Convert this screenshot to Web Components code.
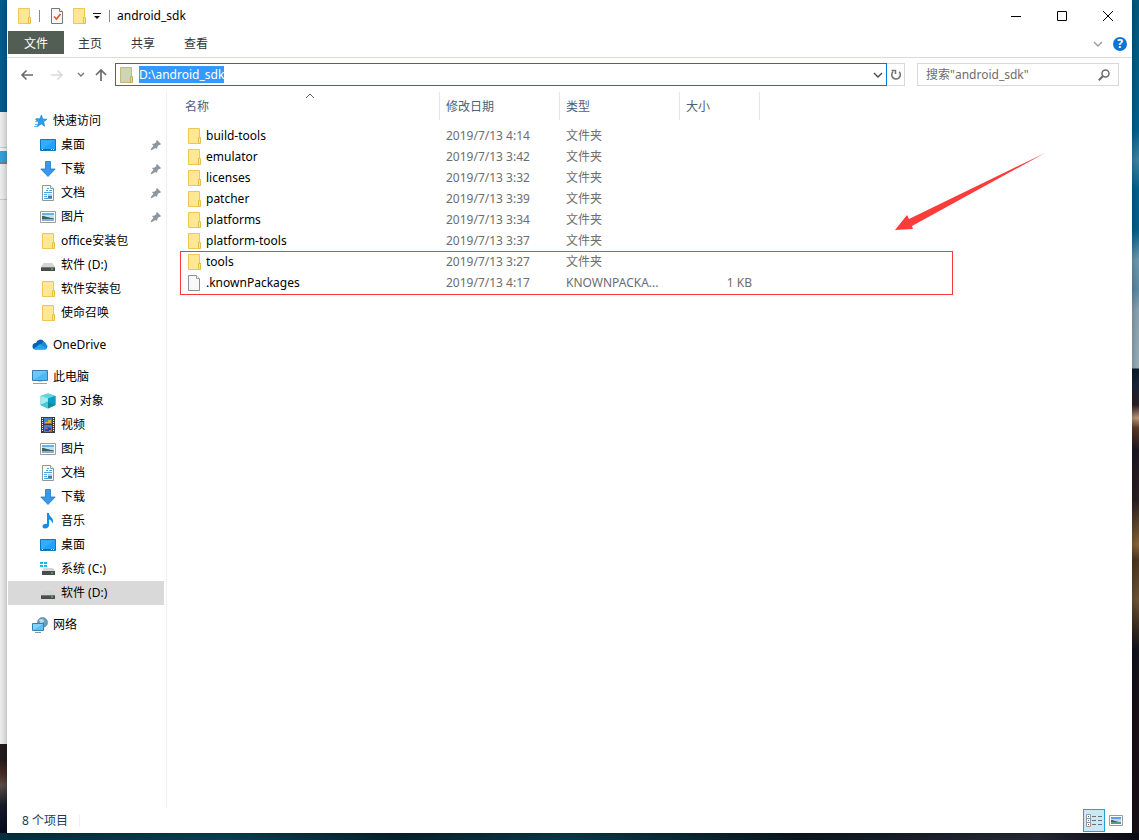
<!DOCTYPE html>
<html lang="zh-CN">
<head>
<meta charset="utf-8">
<title>android_sdk</title>
<style>
  html, body { margin: 0; height: 100%; }
  body { font: 12px/16px "Noto Sans", "Noto Sans CJK SC", sans-serif; color: #000; overflow: hidden; }
</style>
</head>
<body>
<desk-top>
  <explorer-window>
    <title-bar slot="title" heading="android_sdk"></title-bar>
    <ribbon-tabs slot="ribbon"></ribbon-tabs>
    <address-row slot="address" path="D:\android_sdk" hint='搜索"android_sdk"'></address-row>
    <nav-pane slot="nav">
      <nav-group>
        <nav-item icon="star" root>快速访问</nav-item>
        <nav-item icon="desktop" pinned>桌面</nav-item>
        <nav-item icon="download" pinned>下载</nav-item>
        <nav-item icon="doc" pinned>文档</nav-item>
        <nav-item icon="picture" pinned>图片</nav-item>
        <nav-item icon="folder">office安装包</nav-item>
        <nav-item icon="drive">软件 (D:)</nav-item>
        <nav-item icon="folder">软件安装包</nav-item>
        <nav-item icon="folder">使命召唤</nav-item>
      </nav-group>
      <nav-group>
        <nav-item icon="cloud" root>OneDrive</nav-item>
      </nav-group>
      <nav-group>
        <nav-item icon="pc" root>此电脑</nav-item>
        <nav-item icon="cube">3D 对象</nav-item>
        <nav-item icon="video">视频</nav-item>
        <nav-item icon="picture">图片</nav-item>
        <nav-item icon="doc">文档</nav-item>
        <nav-item icon="download">下载</nav-item>
        <nav-item icon="music">音乐</nav-item>
        <nav-item icon="desktop">桌面</nav-item>
        <nav-item icon="sysdrive">系统 (C:)</nav-item>
        <nav-item icon="drive" selected>软件 (D:)</nav-item>
      </nav-group>
      <nav-group>
        <nav-item icon="network" root>网络</nav-item>
      </nav-group>
    </nav-pane>
    <file-list slot="files"></file-list>
    <status-bar slot="status">8 个项目</status-bar>
  </explorer-window>
</desk-top>

<script>
const svg = (w, h, body) => `<svg width="${w}" height="${h}" viewBox="0 0 ${w} ${h}" aria-hidden="true">${body}</svg>`;

const ICONS = {
  folder: svg(16, 16, `<path d="M2.5.5h11v15h-11z" fill="#ffe794" stroke="#edc74f"/><path d="M12.500 9.500h2v6h-2z" fill="#ffe794" stroke="#e6bd45"/>`),
  folderdim: svg(16, 16, `<path d="M2.500.500h11v15h-11z" fill="#cdd5b4" stroke="#c2bb77"/><path d="M12.500 9.500h2v6h-2z" fill="#cdd5b4" stroke="#b9b06a"/>`),
  file: svg(16, 16, `<path d="M2.500.500h8l3 3v12h-11z" fill="#f7f8f9" stroke="#8e8e8e"/><path d="M10.500.500v3h3" fill="#fff" stroke="#9a9a9a"/>`),
  check: svg(16, 16, `<path d="M2.500.500h8l3 3v12h-11z" fill="#f6f7f8" stroke="#777"/><path d="M10.500.500v3h3" fill="#fff" stroke="#777"/><path d="M5 8.500l2.500 2.500 4-5" fill="none" stroke="#e8531f" stroke-width="1.600"/>`),
  star: svg(16, 16, `<path d="M9.500 2l1.300 4 4.200.200-3.300 2.600 1 4.500-3.500-2.300-4 2.800 1.300-4.900L3.500 6.500l4-.400z" fill="#2ba0ea" stroke="#1c7fc6" stroke-width=".6"/><path d="M4 5.500h3M3 8.500h3M3 11.500h2M2 13.500h3" stroke="#5ab6ec"/>`),
  desktop: svg(16, 16, `<path d="M.500 2.500h15v11H.500z" fill="#1fa3fb" stroke="#0f79bd"/><path d="M1 13V3h14z" fill="#4cb7ff" opacity=".45"/><path d="M1 12.500h14" stroke="#0d6fb9"/><path d="M2 12.500h1M11 12.500h1M13 12.500h1" stroke="#fff"/>`),
  download: svg(16, 16, `<path d="M5.500.500h5V8h4.700L8 15.500.800 8h4.700z" fill="#3b97e8" stroke="#1d76c9" stroke-width=".8"/>`),
  doc: svg(16, 16, `<path d="M2.500.500h8l3 3v12h-11z" fill="#fff" stroke="#959595"/><path d="M10.500.500v3h3" fill="#fff" stroke="#959595"/><path d="M7 3.500h2M6 5.500h2M9 5.500h3M4 7.500h8M4 9.500h3M4 11.500h3M4 13.500h8" stroke="#4aa2de"/><path d="M8 9h4v4H8z" fill="#a8d0ee"/><path d="M8 11h4v2H8z" fill="#4f7f80"/>`),
  picture: svg(16, 16, `<path d="M.500 2.500h15v11H.500z" fill="#fff" stroke="#9a9ea2"/><path d="M2 4h12v8H2z" fill="#c3e0f6"/><path d="M2 4h12v2H2z" fill="#6eaef0"/><path d="M2 7c3 0 6 1.500 12 2.500v.500H2z" fill="#35685b"/><path d="M2 10h12v2H2z" fill="#8ab0cf"/>`),
  drive: svg(16, 16, `<path d="M3.500 6h9L15 10H1z" fill="#d3d5d6"/><path d="M1 10h14v4H1z" fill="#4a4d4f"/><path d="M1 10.500h14" stroke="#777"/><path d="M11 11.500h2v1h-2z" fill="#55f04a"/>`),
  sysdrive: svg(16, 16, `<path d="M0 1h3v2H0zM4 1h3v2H4zM0 4h3v2H0zM4 4h3v2H4z" fill="#19b5f1"/><path d="M3.500 7h9.500l2 3H2z" fill="#d3d5d6"/><path d="M2 10h13v4H2z" fill="#4a4d4f"/><path d="M11 11.500h2v1h-2z" fill="#55f04a"/>`),
  cloud: svg(16, 16, `<path d="M4 6a4.500 4.500 0 0 1 8-1.500l-7 8H3A3.300 3.300 0 0 1 4 6z" fill="#0a5fb4"/><path d="M9 7c2-3 5-2 5 0a3 3 0 0 1-1 5.500H5z" fill="#1488db"/><path d="M2 11.500L8 7l7 4.500c-.500.800-1 1-2 1H3z" fill="#29a3ec"/>`),
  pc: svg(16, 16, `<path d="M.500 1.500h15v10H.500z" fill="#4ab9fb" stroke="#3d7da9"/><path d="M1 11V2h14z" fill="#82d2ff" opacity=".6"/><path d="M6 12h4v1H6z" fill="#c3d0da"/><path d="M1 14.500h14" stroke="#8fa5b5"/>`),
  cube: svg(16, 16, `<path d="M8 .500L15.500 3v9L8 15.500.500 12V3z" fill="#25b6cf"/><path d="M8 .500v8L.500 12V3z" fill="#a5ebee"/><path d="M8 .500L15.500 3 8 5.500.500 3z" fill="#5fd6dc"/><path d="M8 5.500L15.500 3v9L8 9z" fill="#0a9dc5"/><path d="M.500 12L8 9v6.500z" fill="#45cbd3"/><path d="M8 9l7.500 3L8 15.500z" fill="#0b8a9a"/>`),
  video: svg(16, 16, `<path d="M1 0h14v16H1z" fill="#3b3b3b"/><path d="M2.500 1v14M13.500 1v14" stroke="#fff" stroke-dasharray="1 1"/><path d="M4 1h8v6H4zM4 8h8v7H4z" fill="#4a7ed6"/><path d="M5 5h3V3h3v3H5z" fill="#d9b13c"/><path d="M5 13l2-3 4 1v3H5z" fill="#26488f"/><path d="M6 11h2v1H6zM9 13h2v1H9z" fill="#e06a3c"/>`),
  music: svg(16, 16, `<path d="M7 0h2c0 4 4 4 4 8 0 1-.500 2-1 2.500 0-2-1-3.500-3-4V12c0 2-1.500 3.500-4 3.500-1.500 0-2.500-1-2.500-2C2.500 11.500 5 10.500 7 11z" fill="#1090e4"/>`),
  network: svg(16, 16, `<circle cx="10.500" cy="5.500" r="5" fill="#6a9fbe" stroke="#47799a" stroke-width=".6"/><path d="M7 3c2-2 5-1 5 1s-3 1-3 3z" fill="#b5dbe6"/><path d="M.500 6.500h11v7H.500z" fill="#5cc0f7" stroke="#3a7fae"/><path d="M1 13V7h10z" fill="#9bdcff" opacity=".6"/><path d="M3 15.500h6" stroke="#8297a8"/>`),
  pin: svg(12, 12, `<path d="M7 1l4 4-1 1-1-.300L7.500 7.500 7 10 5.200 9 3 10.500.500 11.500 1.500 9 3.500 7 2 5l2.600-.500L6.500 3 6 2z" fill="#8c969e"/>`),
  qat: svg(8, 8, `<path d="M0 1.500h8" stroke="#111"/><path d="M1 4h6L4 7z" fill="#111"/>`),
  minimise: svg(10, 10, `<path d="M0 5.500h10" stroke="#000"/>`),
  maximise: svg(10, 10, `<path d="M.500.500h9v9h-9z" fill="none" stroke="#000"/>`),
  close: svg(10, 10, `<path d="M0 0l10 10M10 0L0 10" stroke="#000"/>`),
  back: svg(14, 14, `<path d="M13 7H2M6.500 2.500L2 7l4.500 4.500" fill="none" stroke="#6b6b6b" stroke-width="1.600"/>`),
  forward: svg(14, 14, `<path d="M1 7h11M7.500 2.500L12 7l-4.500 4.500" fill="none" stroke="#d9d9d9" stroke-width="1.600"/>`),
  up: svg(14, 14, `<path d="M7 13V2M2 7l5-5 5 5" fill="none" stroke="#6b6b6b" stroke-width="1.700"/>`),
  recent: svg(8, 6, `<path d="M1 1l3 3 3-3" fill="none" stroke="#777" stroke-width="1.400"/>`),
  chevron: svg(10, 6, `<path d="M1 1l4 4 4-4" fill="none" stroke="currentColor" stroke-width="1.300"/>`),
  sort: svg(10, 6, `<path d="M1 5l4-4 4 4" fill="none" stroke="#666"/>`),
  refresh: svg(12, 12, `<path d="M3.200 2.500a4.300 4.300 0 1 0 6 .300" fill="none" stroke="#777" stroke-width="1.600"/><path d="M1.500 1.500h4V5" fill="none" stroke="#777" stroke-width="1.500"/>`),
  search: svg(12, 12, `<circle cx="7.500" cy="4.500" r="3.500" fill="none" stroke="#6a6a6a" stroke-width="1.500"/><path d="M5 7L.800 11.200" stroke="#6a6a6a" stroke-width="2"/>`),
  details: svg(16, 14, `<path d="M.500.500h4v12h-4zM.500 4.500h4M.500 8.500h4" fill="#fff" stroke="#999"/><path d="M2 2h1v1H2z" fill="#555"/><path d="M2 6h1v1H2z" fill="#2e8fe0"/><path d="M2 10h1v1H2z" fill="#d03a20"/><path d="M6 2.500h4M12 2.500h4M6 6.500h4M12 6.500h4M6 10.500h4M12 10.500h4" stroke="#707070"/>`),
  thumbs: svg(14, 11, `<path d="M.500.500h13v10H.500z" fill="#fff" stroke="#9a9a9a"/><path d="M2 2h10v7H2z" fill="#b5d9f4"/><path d="M2 2h10v2H2z" fill="#5c9df0"/><path d="M2 5c3 0 5 2 10 2H2z" fill="#35685b"/><path d="M2 7h10v2H2z" fill="#5f9196"/>`)
};

const BASE = `<style>
  *, :host { box-sizing: border-box; }
  button { font: inherit; color: inherit; background: none; border: 0; padding: 0; display: flex; align-items: center; justify-content: center; }
  input { font: inherit; margin: 0; border: 0; outline: 0; }
</style>`;

function define(name, render, ready) {
  customElements.define(name, class extends HTMLElement {
    connectedCallback() {
      if (this.shadowRoot) return;
      const root = this.attachShadow({ mode: "open" });
      root.innerHTML = BASE + render(this);
      if (ready) ready(root, this);
    }
  });
}

define("fx-icon", el => `<style>
  :host { display: inline-flex; flex: none; }
  svg { display: block; }
</style>${ICONS[el.getAttribute("name")]}`);

define("desk-top", () => `<style>
  :host { display: grid; grid-template: minmax(0, 1fr) 7px / 7px minmax(0, 1fr) 7px; height: 100vh; background: #060a16; }
  .left { background: linear-gradient(#005d93 0 112px, #f0f0f0 112px 147px, #ccc 147px 148px, #f4f8fb 148px 151px, #37a3e0 151px 162px, #6a87a0 162px 164px, #f0f0f0 164px 199px, #ccc 199px 200px, #f0f0f0 200px 744px, #241a1b 744px 760px, #4b2f26 775px, #5b4f49 785px, #1a1c2b 805px, #050a1c); }
  .right { background: linear-gradient(#045a80, #00638f 130px, #3f83a5 160px, #00628f 190px, #04608c 230px, #6d9bb3 260px, #5d8ca8 290px, #8ba5b3 310px, #9ab0b9 368px, #0b1a2c 369px, #18253a 385px, #2c2025 405px, #c29a7c 418px, #5d3c28 428px, #1d1722 450px, #2b2023 500px, #8a6436 545px, #4d3722 560px, #6f5535 600px, #36291f 630px, #12131d 650px, #1b1016 720px, #160f16); }
  .bottom { grid-column: 1 / -1; background: linear-gradient(90deg, #06303f, #0a4152 20%, #08222e 35%, #0a3b4a 50%, #0b1720 70%, #262a38 91%, #0b0b14); }
  ::slotted(*) { z-index: 1; }
</style>
<div class="left"></div><slot></slot><div class="right"></div><div class="bottom"></div>`);

define("explorer-window", () => `<style>
  :host { display: flex; flex-direction: column; min-width: 0; background: #fff; box-shadow: 0 0 8px rgba(0, 0, 0, .35); }
  .body { flex: 1; display: flex; min-height: 0; }
</style>
<slot name="title"></slot>
<slot name="ribbon"></slot>
<slot name="address"></slot>
<div class="body"><slot name="nav"></slot><slot name="files"></slot></div>
<slot name="status"></slot>`);

define("title-bar", el => `<style>
  :host { display: flex; align-items: center; height: 31px; padding: 0 1px 0 9px; }
  .sep { width: 1px; height: 12px; background: #8a8a8a; }
  .quick { display: flex; align-items: center; gap: 7px; }
  .quick .pair { display: flex; gap: 6px; align-items: center; margin: 0 1px 0 2px; }
  h1 { flex: 1; margin: 0 0 0 7px; font: inherit; }
  .controls { display: flex; align-self: stretch; }
  .controls button { width: 46px; }
</style>
<div class="quick">
  <fx-icon name="folder"></fx-icon><span class="sep"></span>
  <div class="pair">
    <button aria-label="属性"><fx-icon name="check"></fx-icon></button>
    <button aria-label="新建文件夹"><fx-icon name="folder"></fx-icon></button>
    <button aria-label="自定义快速访问工具栏"><fx-icon name="qat"></fx-icon></button>
  </div>
  <span class="sep"></span>
</div>
<h1>${el.getAttribute("heading")}</h1>
<div class="controls">
  <button aria-label="最小化"><fx-icon name="minimise"></fx-icon></button>
  <button aria-label="最大化"><fx-icon name="maximise"></fx-icon></button>
  <button aria-label="关闭"><fx-icon name="close"></fx-icon></button>
</div>`);

define("ribbon-tabs", () => `<style>
  :host { display: flex; height: 27px; padding: 0 5px 0 1px; border-bottom: 1px solid #dadbdc; color: #333; }
  nav { display: flex; flex: 1; }
  nav button { height: 23px; padding: 2px 14px 0; margin-right: 1px; }
  nav .file { padding: 2px 16px 0; margin: 0; background: #525e54; color: #fff; }
  .tools { display: flex; align-items: center; gap: 10px; color: #999; }
  .help { width: 14px; height: 14px; border-radius: 50%; background: #0f74d1; color: #fff; font-weight: 700; }
</style>
<nav><button class="file">文件</button><button>主页</button><button>共享</button><button>查看</button></nav>
<div class="tools">
  <button aria-label="展开功能区"><fx-icon name="chevron"></fx-icon></button>
  <button class="help">?</button>
</div>`);

define("address-row", el => `<style>
  :host { display: flex; align-items: center; height: 34px; padding: 0 13px 1px 8px; }
  .arrows { display: flex; gap: 6px; margin-right: 2px; }
  .arrows button { width: 24px; height: 24px; }
  .arrows .recent { width: 12px; margin-right: -4px; }
  .field { display: flex; align-items: center; height: 23px; border: 1px solid #d9d9d9; }
  .path { flex: 1; min-width: 0; padding: 0 3px 0 2px; border-color: #0078d7; }
  .path input { field-sizing: content; height: 17px; margin-left: 5px; padding: 0; background: #39f; color: #fff; }
  .path button { margin-left: auto; color: #444; }
  .refresh { width: 18px; border-left: 0; justify-content: center; }
  .search { width: 202px; margin-left: 12px; padding: 0 8px; }
  .search input { flex: 1; min-width: 0; padding: 0; background: none; }
  .search input::placeholder { color: #6d6d6d; opacity: 1; }
</style>
<div class="arrows">
  <button aria-label="后退"><fx-icon name="back"></fx-icon></button>
  <button aria-label="前进"><fx-icon name="forward"></fx-icon></button>
  <button class="recent" aria-label="最近浏览的位置"><fx-icon name="recent"></fx-icon></button>
  <button aria-label="上移"><fx-icon name="up"></fx-icon></button>
</div>
<div class="field path">
  <fx-icon name="folderdim"></fx-icon>
  <input aria-label="地址" spellcheck="false">
  <button aria-label="以前的位置"><fx-icon name="chevron"></fx-icon></button>
</div>
<button class="field refresh" aria-label="刷新"><fx-icon name="refresh"></fx-icon></button>
<div class="field search">
  <input type="text" aria-label="搜索">
  <button aria-label="开始搜索"><fx-icon name="search"></fx-icon></button>
</div>`, (root, el) => {
  root.querySelector(".path input").value = el.getAttribute("path");
  root.querySelector(".search input").placeholder = el.getAttribute("hint");
});

define("nav-pane", () => `<style>
  :host { display: flex; flex-direction: column; gap: 8px; flex: none; width: 160px; padding: 17px 2px 0 1px; border-right: 1px solid #f0f0f0; }
</style><slot></slot>`);

define("nav-group", () => `<style>:host { display: block; }</style><slot></slot>`);

define("nav-item", el => `<style>
  :host { display: block; }
  a { display: flex; align-items: center; gap: 5px; height: 24px; padding: 0 2px 0 32px; color: #000; text-decoration: none; white-space: nowrap; }
  :host([root]) a { padding-left: 24px; }
  :host([selected]) a { background: #d9d9d9; }
  .label { flex: 1; }
</style>
<a href="#"><fx-icon name="${el.getAttribute("icon")}"></fx-icon><span class="label"><slot></slot></span>${el.hasAttribute("pinned") ? '<fx-icon name="pin"></fx-icon>' : ""}</a>`);

const FILES = [
  ["build-tools", "2019/7/13 4:14"],
  ["emulator", "2019/7/13 3:42"],
  ["licenses", "2019/7/13 3:32"],
  ["patcher", "2019/7/13 3:39"],
  ["platforms", "2019/7/13 3:34"],
  ["platform-tools", "2019/7/13 3:37"],
  ["tools", "2019/7/13 3:27"],
  [".knownPackages", "2019/7/13 4:17", "KNOWNPACKA...", "1 KB", "file"]
];

define("file-list", () => `<style>
  :host { display: block; flex: 1; min-width: 0; position: relative; }
  table { table-layout: fixed; width: 593px; border-collapse: separate; border-spacing: 0; color: #6d6d6d; }
  .name { width: 273px; } .date, .type { width: 120px; } .size { width: 80px; }
  th { position: relative; height: 28px; padding: 2px 0 0 6px; border-right: 1px solid #e5e5e5; font-weight: 400; text-align: left; color: #4c607a; }
  th:first-child { padding-left: 18px; }
  th fx-icon { position: absolute; left: 138px; top: 1px; }
  tbody::before { content: ""; display: block; height: 6px; }
  td { height: 21px; padding: 2px 0 3px 6px; vertical-align: top; white-space: nowrap; }
  td:first-child { padding-left: 19px; color: #000; }
  td:last-child { padding-right: 8px; text-align: right; }
  td div { display: flex; align-items: center; gap: 4px; }
  .mark { position: absolute; left: 13px; top: 159px; width: 773px; height: 44px; border: 1px solid #fa3a3a; }
  .arrow { position: absolute; left: 728px; top: 61px; }
</style>
<table>
  <colgroup><col class="name"><col class="date"><col class="type"><col class="size"></colgroup>
  <thead><tr><th>名称<fx-icon name="sort"></fx-icon></th><th>修改日期</th><th>类型</th><th>大小</th></tr></thead>
  <tbody>${FILES.map(([n, d, t = "文件夹", s = "", i = "folder"]) =>
    `<tr><td><div><fx-icon name="${i}"></fx-icon><span>${n}</span></div></td><td>${d}</td><td>${t}</td><td>${s}</td></tr>`).join("")}</tbody>
</table>
<div class="mark"></div>
<svg class="arrow" width="150" height="78" aria-hidden="true"><path d="M0 77L12 62l2 4L150 0 17 73l1 3z" fill="#fc3b3b"/></svg>`);

define("status-bar", () => `<style>
  :host { display: flex; align-items: center; height: 25px; padding: 0 5px 0 15px; color: #1e395b; }
  .count { padding-right: 11px; border-right: 1px solid #f0f0f0; line-height: 12px; }
  .views { display: flex; margin-left: auto; }
  button { width: 22px; height: 23px; }
  button[aria-pressed=true] { background: #cbe8f6; border: 1px solid #26a0da; }
</style>
<span class="count"><slot></slot></span>
<div class="views">
  <button aria-label="详细信息" aria-pressed="true"><fx-icon name="details"></fx-icon></button>
  <button aria-label="大缩略图" aria-pressed="false"><fx-icon name="thumbs"></fx-icon></button>
</div>`);
</script>
</body>
</html>
